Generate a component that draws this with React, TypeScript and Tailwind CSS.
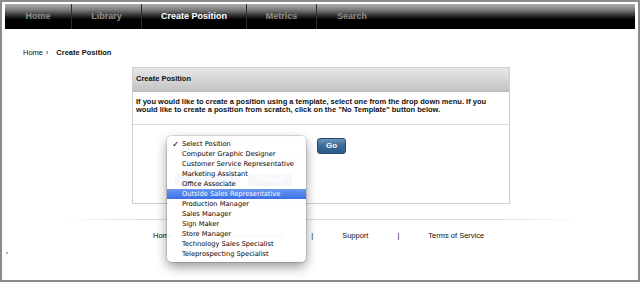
import React from 'react';

const navItems = [
  { label: 'Home', w: 'w-[67px]' },
  { label: 'Library', w: 'w-[70px]' },
  { label: 'Create Position', w: 'w-[105px]', active: true },
  { label: 'Metrics', w: 'w-[70px]' },
  { label: 'Search', w: 'w-[70px]', last: true },
];

const options = [
  'Select Position',
  'Computer Graphic Designer',
  'Customer Service Representative',
  'Marketing Assistant',
  'Office Associate',
  'Outside Sales Representative',
  'Production Manager',
  'Sales Manager',
  'Sign Maker',
  'Store Manager',
  'Technology Sales Specialist',
  'Teleprospecting Specialist',
];

function Button({ children, className = '' }: { children: React.ReactNode; className?: string }) {
  return (
    <button
      className={`rounded-[3px] border border-[#23476d] bg-[linear-gradient(to_bottom,#6b93bd_0%,#3d6a98_50%,#2e5a88_100%)] text-white text-[8px] font-bold leading-none ${className}`}
    >
      {children}
    </button>
  );
}

export default function App() {
  return (
    <div className="relative w-[640px] h-[282px] overflow-hidden border-2 border-[#8c8c8c] bg-white font-['Liberation_Sans',Arial,sans-serif] text-[#111]">
      {/* top nav */}
      <div className="mx-[3px] mt-[2px] h-[25px] flex bg-[linear-gradient(to_bottom,#b0b0b0_0%,#7a7a7a_24%,#222_50%,#000_62%,#000_100%)]">
        {navItems.map((n) => (
          <div
            key={n.label}
            className={`${n.w} flex items-center justify-center text-[9px] font-bold ${
              n.active ? 'text-white' : 'text-[#8d8d8d]'
            } ${n.last ? '' : 'border-r border-[#2e2e2e]'}`}
          >
            {n.label}
          </div>
        ))}
      </div>

      {/* breadcrumb */}
      <div className="ml-[21px] mt-[20px] flex items-center text-[7.5px] leading-none">
        <span>Home</span>
        <span className="ml-[3px] text-[7px]">›</span>
        <span className="ml-[8px] font-bold">Create Position</span>
      </div>

      {/* panel */}
      <div className="ml-[130px] mt-[10px] w-[378px] h-[137px] border border-[#cfcfcf] flex flex-col">
        <div className="h-[24px] flex items-center px-[3px] bg-[linear-gradient(to_bottom,#e6e6e6_0%,#d6d6d6_50%,#c2c2c2_100%)] border-b border-[#b8b8b8] text-[7.5px] font-bold">
          Create Position
        </div>
        <div className="px-[3px] pt-[6px] pb-[9px] text-[7.5px] leading-[8.5px] font-bold border-b border-[#dcdcdc]">
          If you would like to create a position using a template, select one from the drop down menu. If you would like
          to create a position from scratch, click on the "No Template" button below.
        </div>
        <div className="flex items-start pt-[13px] pl-[35px] gap-[11px]">
          <div className="w-[138px] h-[16px] rounded-[4px] border border-[#bdbdbd] bg-white" />
          <Button className="h-[16px] w-[29px]">Go</Button>
        </div>
        <div className="flex pl-[42px] pt-[20px] gap-[8px]">
          <Button className="h-[12px] w-[65px]">No Template</Button>
          <Button className="h-[12px] w-[44px]">Cancel</Button>
        </div>
      </div>

      {/* footer */}
      <div className="mx-[59px] mt-[15px] h-px bg-[linear-gradient(to_right,transparent,#dedede_15%,#dedede_85%,transparent)]" />
      <div className="ml-[151px] mt-[12px] flex items-center gap-[29px] text-[7.5px] leading-none">
        <span>Home</span>
        <span>|</span>
        <span>Send to Friend</span>
        <span>|</span>
        <span>Support</span>
        <span>|</span>
        <span>Terms of Service</span>
      </div>
      <div className="absolute left-[4px] top-[250px] w-[2px] h-[2px] bg-[#b5b5b5]" />

      {/* native select popup */}
      <div className="absolute left-[165px] top-[134px] w-[139px] rounded-[5px] bg-white/[0.95] py-[3px] shadow-[0_5px_12px_rgba(0,0,0,0.4),0_0_0_1px_rgba(0,0,0,0.12)] font-['DejaVu_Sans',sans-serif] text-[6.7px] text-[#000]">
        {options.map((o, i) => (
          <div
            key={o}
            className={`relative h-[10px] flex items-center pl-[15px] whitespace-nowrap ${
              i === 5 ? 'bg-[linear-gradient(to_bottom,#6a97f2,#3a6ee6)] text-white' : ''
            }`}
          >
            {i === 0 && <span className="absolute left-[5px] text-[8.5px] font-bold">✓</span>}
            {o}
          </div>
        ))}
      </div>
    </div>
  );
}
